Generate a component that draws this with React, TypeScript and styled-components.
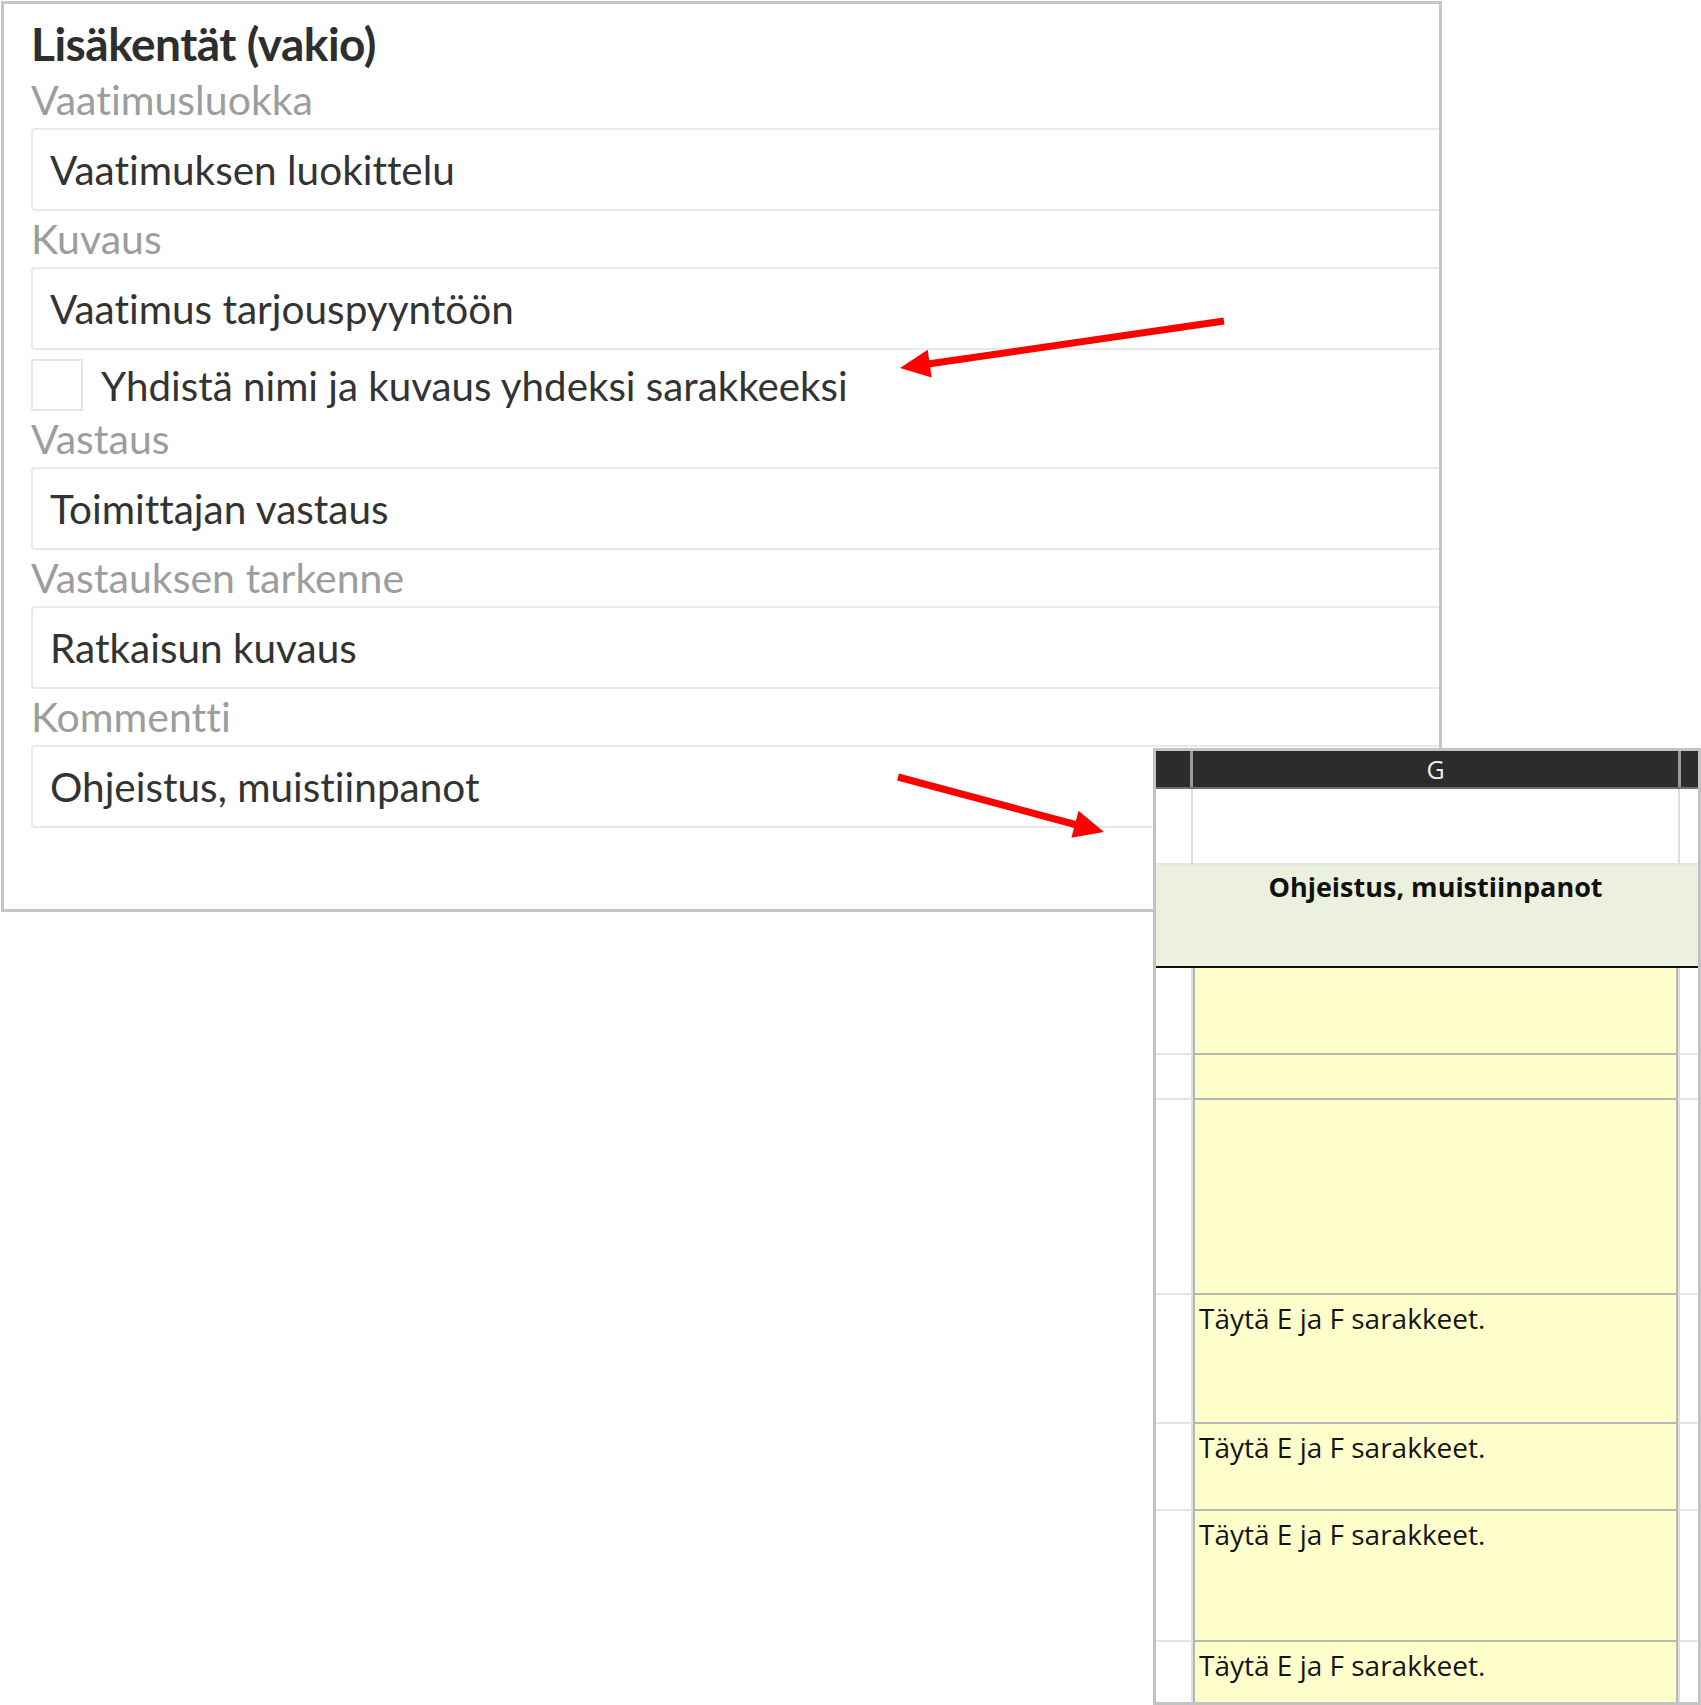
import styled, { createGlobalStyle } from "styled-components";

const GlobalStyle = createGlobalStyle`
  html, body {
    margin: 0;
    padding: 0;
    background: #ffffff;
  }
  body {
    font-family: Lato, "Noto Sans", sans-serif;
    font-variant-ligatures: none;
  }
`;

const Page = styled.div`
  position: relative;
  width: 1701px;
  height: 1705px;
  overflow: hidden;
`;

// lomakepaneeli
const Panel = styled.section`
  box-sizing: border-box;
  width: 1441px;
  height: 911px;
  margin: 1px 0 0 1px;
  border: 3px solid #c6c6c6;
  padding: 12px 0 0 27px;
  display: flex;
  flex-direction: column;
`;

const Title = styled.h2`
  margin: 0;
  height: 56px;
  line-height: 56px;
  font-size: 46px;
  font-weight: 700;
  letter-spacing: -0.5px;
  color: #2e2e2e;
`;

const FieldLabel = styled.div`
  height: 56px;
  line-height: 56px;
  font-size: 41px;
  color: #9d9d9d;
`;

const Input = styled.div`
  box-sizing: border-box;
  height: 83px;
  display: flex;
  align-items: center;
  padding-left: 17px;
  border: 2px solid #e9e9e9;
  border-right: none;
  border-radius: 4px 0 0 4px;
  font-size: 40.5px;
  color: #333333;
`;

const CheckRow = styled.label`
  display: flex;
  align-items: center;
  gap: 18px;
  padding-top: 9px;
  height: 61px;
  box-sizing: border-box;
  font-size: 40.3px;
  color: #333333;
`;

const CheckBox = styled.span`
  box-sizing: border-box;
  width: 52px;
  height: 52px;
  border: 2px solid #e6e6e6;
  background: #ffffff;
`;

// excel-leike
const Sheet = styled.div`
  position: absolute;
  left: 1153px;
  top: 748px;
  width: 548px;
  height: 957px;
  box-sizing: border-box;
  border: 3px solid #c3c3c3;
  background: #ffffff;
  overflow: hidden;
  font-family: "Open Sans", "Noto Sans", sans-serif;
`;

const SheetRow = styled.div<{ $h: number; $bg?: string; $line?: string }>`
  display: flex;
  box-sizing: border-box;
  height: ${(p) => p.$h}px;
  background: ${(p) => p.$bg || "transparent"};
  border-bottom: ${(p) => (p.$line ? `2px solid ${p.$line}` : "none")};
`;

const RowHead = styled.div<{ $dark?: boolean; $plain?: boolean }>`
  box-sizing: border-box;
  width: 37px;
  flex-shrink: 0;
  border-right: ${(p) =>
    p.$plain ? "none" : p.$dark ? "3px solid #9a9a9a" : "2px solid #dedede"};
  border-bottom: ${(p) => (p.$dark || p.$plain ? "none" : "2px solid #e4e4e4")};
`;

const Tail = styled.div<{ $dark?: boolean; $plain?: boolean }>`
  box-sizing: border-box;
  width: 20px;
  flex-shrink: 0;
  border-left: ${(p) =>
    p.$plain ? "none" : p.$dark ? "3px solid #9a9a9a" : "2px solid #dedede"};
  border-bottom: ${(p) => (p.$dark || p.$plain ? "none" : "2px solid #e4e4e4")};
`;

const ColHeader = styled.div`
  flex: 1;
  text-align: center;
  font-size: 25px;
  line-height: 36px;
  color: #eeeeee;
`;

const HeaderCell = styled.div`
  flex: 1;
  text-align: center;
  padding-top: 3px;
  font-size: 27px;
  line-height: 38px;
  font-weight: 700;
  color: #111111;
`;

const Cell = styled.div<{ $fill?: boolean }>`
  flex: 1;
  box-sizing: border-box;
  background: ${(p) => (p.$fill ? "#ffffcc" : "#ffffff")};
  border-bottom: 2px solid ${(p) => (p.$fill ? "#b7b7b7" : "#e4e4e4")};
  padding: 4px 0 0 4px;
  font-size: 28px;
  line-height: 38px;
  color: #141414;
`;

const FilledCell = styled(Cell)`
  border-left: 2px solid #b7b7b7;
  border-right: 2px solid #b7b7b7;
`;

const Arrows = styled.svg`
  position: absolute;
  left: 0;
  top: 0;
  pointer-events: none;
`;

const fields = [
  { label: "Vaatimusluokka", value: "Vaatimuksen luokittelu" },
  { label: "Kuvaus", value: "Vaatimus tarjouspyyntöön" },
  { label: "Vastaus", value: "Toimittajan vastaus" },
  { label: "Vastauksen tarkenne", value: "Ratkaisun kuvaus" },
  { label: "Kommentti", value: "Ohjeistus, muistiinpanot" },
];

const rows = [
  { h: 87, text: "" },
  { h: 45, text: "" },
  { h: 195, text: "" },
  { h: 129, text: "Täytä E ja F sarakkeet." },
  { h: 87, text: "Täytä E ja F sarakkeet." },
  { h: 131, text: "Täytä E ja F sarakkeet." },
  { h: 80, text: "Täytä E ja F sarakkeet." },
];

export default function App() {
  return (
    <Page>
      <GlobalStyle />
      <Panel>
        <Title>Lisäkentät (vakio)</Title>
        {fields.map((f, i) => (
          <div key={f.label}>
            <FieldLabel>{f.label}</FieldLabel>
            <Input>{f.value}</Input>
            {i === 1 && (
              <CheckRow>
                <CheckBox />
                Yhdistä nimi ja kuvaus yhdeksi sarakkeeksi
              </CheckRow>
            )}
          </div>
        ))}
      </Panel>

      <Sheet>
        <SheetRow $h={38} $bg="#2c2c2c" $line="#6f6f6f">
          <RowHead $dark />
          <ColHeader>G</ColHeader>
          <Tail $dark />
        </SheetRow>
        <SheetRow $h={76}>
          <RowHead />
          <Cell />
          <Tail />
        </SheetRow>
        <SheetRow $h={103} $bg="#ebf1de" $line="#111111">
          <RowHead $plain />
          <HeaderCell>Ohjeistus, muistiinpanot</HeaderCell>
          <Tail $plain />
        </SheetRow>
        {rows.map((r, i) => (
          <SheetRow key={i} $h={r.h}>
            <RowHead />
            <FilledCell $fill>{r.text}</FilledCell>
            <Tail />
          </SheetRow>
        ))}
      </Sheet>

      <Arrows width="1701" height="1705" viewBox="0 0 1701 1705">
        <line x1="1224" y1="321" x2="928" y2="364" stroke="#ff0000" strokeWidth="7" />
        <polygon points="900,368 931.7,377.6 927.7,349.8" fill="#ff0000" />
        <line x1="898" y1="777" x2="1077" y2="825" stroke="#ff0000" strokeWidth="7" />
        <polygon points="1104,832 1071.4,837.8 1078.6,810.8" fill="#ff0000" />
      </Arrows>
    </Page>
  );
}
